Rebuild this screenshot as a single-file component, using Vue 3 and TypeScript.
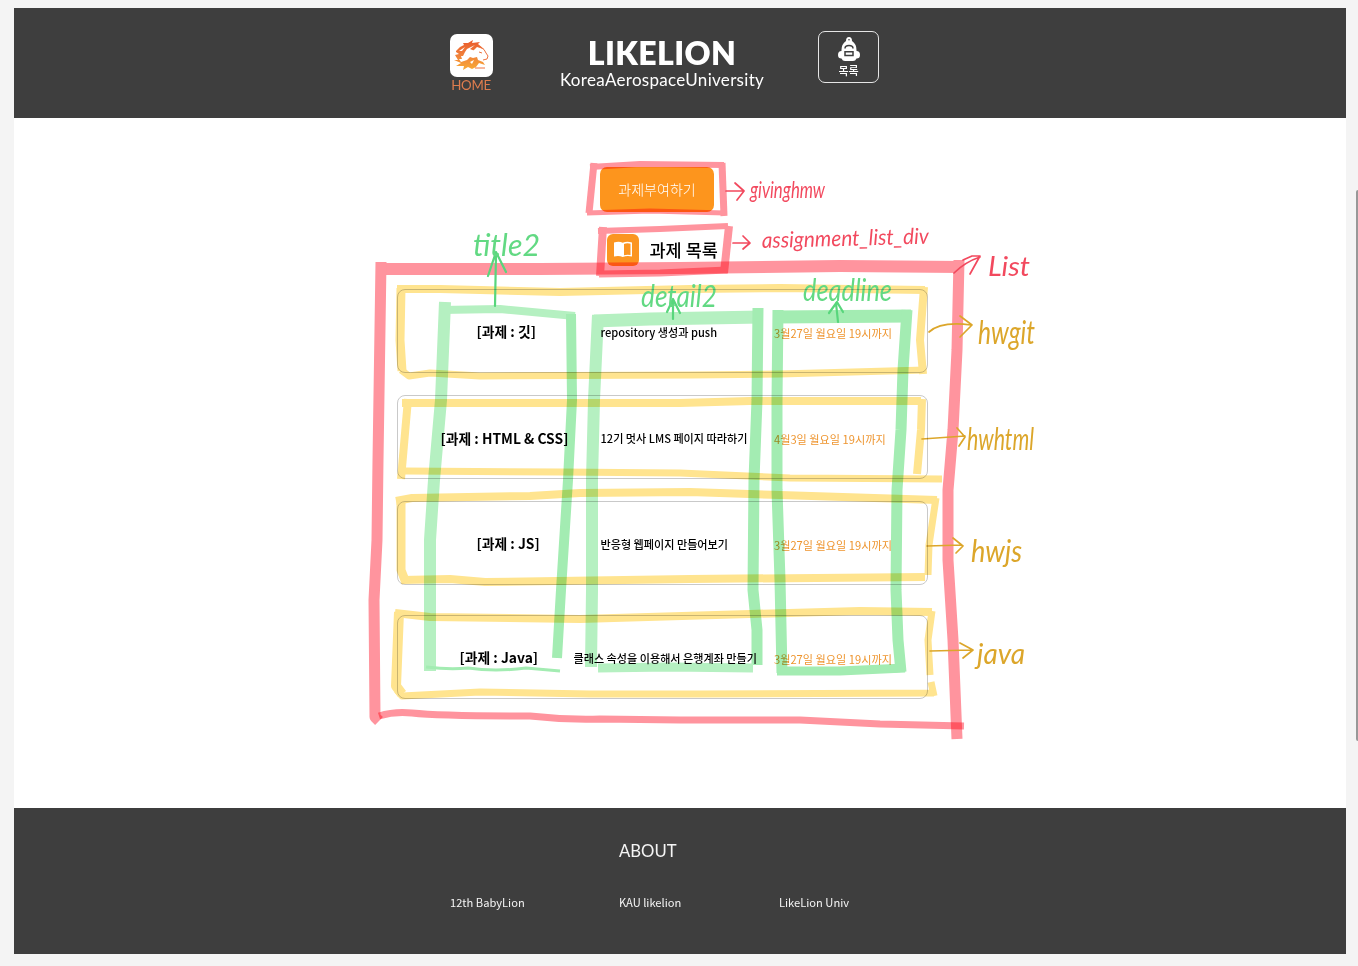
<script setup lang="ts">
interface Homework {
  id: string
  title: string
  detail: string
  deadline: string
}
interface Stroke {
  tone: string
  width: number
  d: string
}
interface Label {
  tone: string
  text: string
  x: number
  y: number
  length: number
  size: number
  tilt?: number
}

const homeworks: Homework[] = [
  { id: 'hwgit', title: '[과제 : 깃]', detail: 'repository 생성과 push', deadline: '3월27일 월요일 19시까지' },
  { id: 'hwhtml', title: '[과제 : HTML & CSS]', detail: '12기 멋사 LMS 페이지 따라하기', deadline: '4월3일 월요일 19시까지' },
  { id: 'hwjs', title: '[과제 : JS]', detail: '반응형 웹페이지 만들어보기', deadline: '3월27일 월요일 19시까지' },
  { id: 'java', title: '[과제 : Java]', detail: '클래스 속성을 이용해서 은행계좌 만들기', deadline: '3월27일 월요일 19시까지' },
]

// Strokes inside one layer do not darken each other; layers do.
const layers: Stroke[][] = [
  [
    { tone: 'pink', width: 7, d: 'M594 163L589 213' },
    { tone: 'pink', width: 6, d: 'M590 167L640 164L724 165' },
    { tone: 'pink', width: 7, d: 'M722 163L724 216' },
    { tone: 'pink', width: 5, d: 'M587 213L650 211L725 213' },
    { tone: 'pink', width: 8, d: 'M603 227L600 276' },
    { tone: 'pink', width: 6, d: 'M598 231L660 229L728 226' },
    { tone: 'pink', width: 8, d: 'M729 226L724 273' },
    { tone: 'pink', width: 7, d: 'M599 274L660 273L727 270' },
    { tone: 'pink', width: 7, d: 'M379 716Q395 711 412 713Q440 716 530 716Q565 720 600 719L680 720L800 720L880 724L964 726' },
  ],
  [
    { tone: 'pink', width: 12, d: 'M377 269L540 269L680 268L840 266L961 267' },
    { tone: 'pink', width: 11, d: 'M381 262L378 460L377 540L374 600L375 717L379 721' },
    { tone: 'pink', width: 11, d: 'M959 260L957 350L953 430L948 490L948 560L953 640L957 739' },
  ],
  [
    { tone: 'yellow', width: 8, d: 'M397 289L440 289L560 292L690 289L780 288L925 290' },
    { tone: 'yellow', width: 9, d: 'M401 288L400 340L402 371' },
    { tone: 'yellow', width: 7, d: 'M401 370L409 376L430 373L480 376L690 375L780 374L925 370' },
    { tone: 'yellow', width: 8, d: 'M924 287L920 340L923 374' },
    { tone: 'yellow', width: 8, d: 'M408 399L401 479' },
    { tone: 'yellow', width: 8, d: 'M402 403L560 403L680 403L750 401L921 401' },
    { tone: 'yellow', width: 8, d: 'M922 399L921 430L917 474' },
    { tone: 'yellow', width: 7, d: 'M405 471L560 472L680 473L790 478L942 479' },
    { tone: 'yellow', width: 8, d: 'M396 501L412 498L530 496L580 493L690 492L780 495L937 500' },
    { tone: 'yellow', width: 9, d: 'M401 499L401 570L406 583' },
    { tone: 'yellow', width: 8, d: 'M402 580L450 579L485 582L690 579L925 577' },
    { tone: 'yellow', width: 7, d: 'M936 498L929 545L928 575' },
    { tone: 'yellow', width: 10, d: 'M399 612L396 686L402 694' },
    { tone: 'yellow', width: 8, d: 'M395 613L430 617L580 619L750 614L860 611L932 612' },
    { tone: 'yellow', width: 7, d: 'M932 611L928 640L930 675' },
    { tone: 'yellow', width: 7, d: 'M397 690L402 696L480 692L590 694L700 694L934 693M931 682L934 696' },
  ],
  [
    { tone: 'mint', width: 12, d: 'M445 302L441 400L434 480L430 540L430 671' },
    { tone: 'mint', width: 8, d: 'M441 310L500 309L575 316' },
    { tone: 'green', width: 10, d: 'M571 314L572 400L568 480L561 590L557 658' },
    { tone: 'green', width: 3, d: 'M426 667Q450 670 468 668Q495 672 526 668L560 671' },
    { tone: 'mint', width: 12, d: 'M598 315L594 400L592 480L592 590L591 667' },
    { tone: 'mint', width: 13, d: 'M594 321L650 319L762 317' },
    { tone: 'green', width: 11, d: 'M758 308L757 400L754 480L753 590L757 630L757 665' },
    { tone: 'mint', width: 9, d: 'M598 668L670 667L753 668' },
    { tone: 'green', width: 11, d: 'M778 310L777 400L777 490L780 580L782 673' },
    { tone: 'green', width: 13, d: 'M776 317L911 316' },
    { tone: 'green', width: 11, d: 'M907 310L903 370L901 430L897 490L896 590L898 640L901 672' },
    { tone: 'green', width: 9, d: 'M777 671L840 671L905 668' },
  ],
]

const arrows: Stroke[] = [
  { tone: 'red', width: 1.7, d: 'M726 191L744 191M735 183L744 191L737 200' },
  { tone: 'red', width: 1.7, d: 'M733 243L749 243M743 236L750 243L743 249' },
  { tone: 'red', width: 1.7, d: 'M954 273Q965 262 980 257M963 260L972 256L980 256L970 274' },
  { tone: 'gold', width: 1.7, d: 'M929 332Q941 321 971 325M960 316L972 325L960 337' },
  { tone: 'gold', width: 1.7, d: 'M922 439L965 436M957 428L965 437L959 446' },
  { tone: 'gold', width: 1.7, d: 'M927 546L962 545M953 538L963 546L956 553' },
  { tone: 'gold', width: 1.7, d: 'M930 651L972 650M960 643L973 650L963 658' },
  { tone: 'leaf', width: 2.2, d: 'M495 306L496 254M488 276L496 252L506 272' },
  { tone: 'leaf', width: 2.2, d: 'M673 319L673 299M667 312L673 299L680 313' },
  { tone: 'leaf', width: 2.2, d: 'M838 322L836 303M829 313L837 302L843 312' },
]

const labels: Label[] = [
  { tone: 'red', text: 'givinghmw', x: 750, y: 198, length: 75, size: 23 },
  { tone: 'red', text: 'assignment_list_div', x: 762, y: 248, length: 167, size: 22, tilt: -1.5 },
  { tone: 'red', text: 'List', x: 988, y: 276, length: 42, size: 27 },
  { tone: 'gold', text: 'hwgit', x: 978, y: 344, length: 57, size: 32 },
  { tone: 'gold', text: 'hwhtml', x: 967, y: 450, length: 67, size: 30 },
  { tone: 'gold', text: 'hwjs', x: 971, y: 562, length: 51, size: 31 },
  { tone: 'gold', text: 'java', x: 977, y: 664, length: 48, size: 28 },
  { tone: 'leaf', text: 'title2', x: 473, y: 256, length: 67, size: 30 },
  { tone: 'leaf', text: 'detail2', x: 641, y: 307, length: 76, size: 30 },
  { tone: 'leaf', text: 'deadline', x: 803, y: 301, length: 89, size: 30 },
]
</script>

<template>
  <div class="desk">
    <div class="page">
      <header class="top">
        <a class="home">
          <svg class="lion" viewBox="0 0 43 43">
            <defs>
              <linearGradient id="mane" x1="0" y1="0" x2="0" y2="1">
                <stop offset="0" stop-color="#e9592b" />
                <stop offset="0.500" stop-color="#f0803a" />
                <stop offset="1" stop-color="#f8ab35" />
              </linearGradient>
            </defs>
            <path fill="url(#mane)" d="M6 17L10 13L14 11L13 9L18 9L23 6L22 9L30 8L28 10L34 15L30 14L27 13L23 17L17 18L15 22L11 22L12 25L9 25L11 28L17 26L20 23L23 24L27 23L28 26L33 28L35 31L29 29L26 33L22 35L18 33L13 36L14 32L6 32L11 29L4 26L8 26L5 21L9 20L6 18Z" />
            <path fill="#fff" d="M17 15L25 11L20 15L25 17L18 20L12 24L15 18ZM9 17L15 13L12 17ZM20 28L24 26L22 30Z" />
            <path fill="none" stroke="#ee7340" stroke-width="1" d="M30 13Q35 15 36 19L38 22L37 25L33 26M29 18L32 19M25 34H35" />
          </svg>
          <span>HOME</span>
        </a>
        <div class="brand">
          <h1>LIKELION</h1>
          <p>KoreaAerospaceUniversity</p>
        </div>
        <a class="menu">
          <svg class="bag" viewBox="0 0 22 24">
            <path fill="#fff" d="M8 4Q8 0 11 0Q14 0 14 4Q18.500 7 18.500 13V14Q22 14 22 18Q22 21.500 18.500 21.500Q17.500 24 15 24H7Q4.500 24 3.500 21.500Q0 21.500 0 18Q0 14 3.500 14V13Q3.500 7 8 4Z" />
            <circle cx="11" cy="2.800" r="0.800" fill="#3e3e3e" />
            <path fill="none" stroke="#3e3e3e" stroke-width="1.500" d="M7 11.500Q7 8.500 11 8.500Q15 8.500 15 11.500M7 14.800H15V18.500H7Z" />
          </svg>
          <span>목록</span>
        </a>
      </header>

      <main>
        <button class="giving">과제부여하기</button>
        <div class="heading">
          <svg class="book" viewBox="0 0 32 32">
            <rect width="32" height="32" rx="6" fill="#fb9521" />
            <path fill="#fff" d="M7 8.500Q12 7 15.700 8.700Q20 7 25 8.500V22.500Q20 21.300 15.700 23Q12 21.300 7 22.500Z" />
            <path fill="#fb9521" d="M17 10Q20 8.800 23.500 9.700V21Q20 20.200 17 21.300Z" />
          </svg>
          <h2>과제 목록</h2>
        </div>
        <section class="list">
          <article v-for="hw in homeworks" :key="hw.id" class="card" :class="hw.id">
            <h3>{{ hw.title }}</h3>
            <p class="detail">{{ hw.detail }}</p>
            <p class="deadline">{{ hw.deadline }}</p>
          </article>
        </section>
      </main>

      <footer>
        <h4>ABOUT</h4>
        <div class="links">
          <span>12th BabyLion</span>
          <span>KAU likelion</span>
          <span>LikeLion Univ</span>
        </div>
      </footer>
    </div>

    <svg class="notes" viewBox="0 0 1358 966">
      <g v-for="(layer, n) in layers" :key="n" class="layer">
        <path v-for="(s, i) in layer" :key="i" class="stroke" :class="s.tone" :stroke-width="s.width" :d="s.d" />
      </g>
      <path v-for="(s, i) in arrows" :key="'a' + i" class="stroke pen" :class="s.tone" :stroke-width="s.width" :d="s.d" />
      <text
        v-for="l in labels"
        :key="l.text"
        :class="l.tone"
        :x="l.x"
        :y="l.y"
        :font-size="l.size"
        :textLength="l.length"
        lengthAdjust="spacingAndGlyphs"
        :transform="`rotate(${l.tilt ?? 0} ${l.x} ${l.y})`"
      >{{ l.text }}</text>
    </svg>
    <i class="scroll"></i>
  </div>
</template>

<style>
body {
  margin: 0;
  overflow: hidden;
}
</style>

<style scoped>
* {
  box-sizing: border-box;
  margin: 0;
}
.desk {
  position: relative;
  width: 1358px;
  height: 966px;
  padding: 7.500px 12px 12px 14px;
  background: #f4f4f4;
  font-family: 'Noto Sans CJK KR', sans-serif;
  color: #000;
  white-space: nowrap;
}
.page {
  display: flex;
  flex-direction: column;
  height: 100%;
  background: #fff;
}
.top {
  display: flex;
  height: 110.500px;
  flex: none;
  padding-left: 435.500px;
  background: #3e3e3e;
  color: #fff;
}
.home {
  display: flex;
  flex-direction: column;
  align-items: center;
  width: 43px;
  padding-top: 26.500px;
}
.lion {
  width: 43px;
  height: 43px;
  flex: none;
  border-radius: 7px;
  background: #fff;
}
.home span {
  font: 13.300px/16px Lato, sans-serif;
  letter-spacing: -0.300px;
  color: #e07d4e;
}
.brand {
  width: 240px;
  margin-left: 49.500px;
  padding-top: 28.500px;
  text-align: center;
}
.brand h1 {
  font: 800 32px/34px Lato, sans-serif;
  letter-spacing: 0.400px;
}
.brand p {
  font: 17px/20px Lato, sans-serif;
  letter-spacing: 0.300px;
}
.menu {
  display: flex;
  flex-direction: column;
  align-items: center;
  width: 61px;
  height: 52px;
  margin: 23.500px 0 0 36px;
  padding-top: 5px;
  border: 1px solid #e6e6e6;
  border-radius: 7px;
}
.bag {
  width: 22px;
  height: 24px;
  flex: none;
}
.menu span {
  font-size: 11px;
  font-weight: 500;
  line-height: 16px;
  margin-top: 1px;
}
main {
  flex: 1;
  padding-top: 49px;
}
.giving {
  display: block;
  width: 114px;
  height: 45px;
  margin-left: 586px;
  border: 0;
  border-radius: 7px;
  background: #fd951d;
  color: #fff;
  font: 300 14px/20px 'Noto Sans CJK KR', sans-serif;
  padding: 0 0 2px;
}
.heading {
  display: flex;
  align-items: center;
  gap: 10.500px;
  height: 32px;
  margin: 22px 0 0 593px;
}
.book {
  width: 32px;
  height: 32px;
}
h2 {
  padding-bottom: 2px;
  font-size: 17.500px;
  font-weight: 500;
}
.list {
  width: 531px;
  margin: 23px 0 0 383px;
}
.card {
  display: grid;
  grid-template-columns: 202.500px 173.500px 1fr;
  align-items: center;
  height: 84px;
  margin-bottom: 22px;
  padding-top: 2px;
  border: 1px solid #c9c9c9;
  border-radius: 8px;
}
.card.hwjs {
  margin-bottom: 30px;
}
.card.java {
  grid-template-columns: 175.500px 200.500px 1fr;
}
h3 {
  padding: 0 0 3px 78.500px;
  font-size: 13.850px;
  font-weight: 700;
}
.hwhtml h3 {
  padding: 0 0 0 42.500px;
}
.java h3 {
  padding-left: 61.500px;
}
.detail {
  font-size: 11.100px;
  font-weight: 500;
}
.deadline {
  padding-top: 2px;
  font-size: 11.150px;
  color: #ee952f;
}
footer {
  height: 146px;
  flex: none;
  padding: 32px 0 0 436px;
  background: #3e3e3e;
  color: #f5f5f5;
}
h4 {
  margin-left: 169px;
  font: 16.700px/22px Lato, sans-serif;
}
.links {
  display: grid;
  grid-template-columns: 169px 160px 1fr;
  margin-top: 31px;
  font-size: 11.150px;
  line-height: 18px;
}
.notes {
  position: absolute;
  inset: 0;
  width: 1358px;
  height: 966px;
  mix-blend-mode: multiply;
  pointer-events: none;
}
.notes text {
  font-family: Lato, sans-serif;
  font-style: italic;
  font-weight: 400;
}
.layer {
  mix-blend-mode: multiply;
}
.stroke {
  fill: none;
  stroke-linejoin: round;
}
.pen {
  stroke-linecap: round;
}
.pink { stroke: #ff949e; }
.yellow { stroke: #ffe48f; }
.mint { stroke: #b5f0c1; }
.green { stroke: #a3ecb2; }
.pen.red { stroke: #f2495e; }
.pen.gold { stroke: #dca62a; }
.pen.leaf { stroke: #58d67c; }
text.red { fill: #f2495e; }
text.gold { fill: #dca62a; }
text.leaf { fill: #62d983; }
.scroll {
  position: absolute;
  right: 0;
  top: 190px;
  width: 2px;
  height: 551px;
  border-radius: 2px 0 0 2px;
  background: #989898;
}
</style>
